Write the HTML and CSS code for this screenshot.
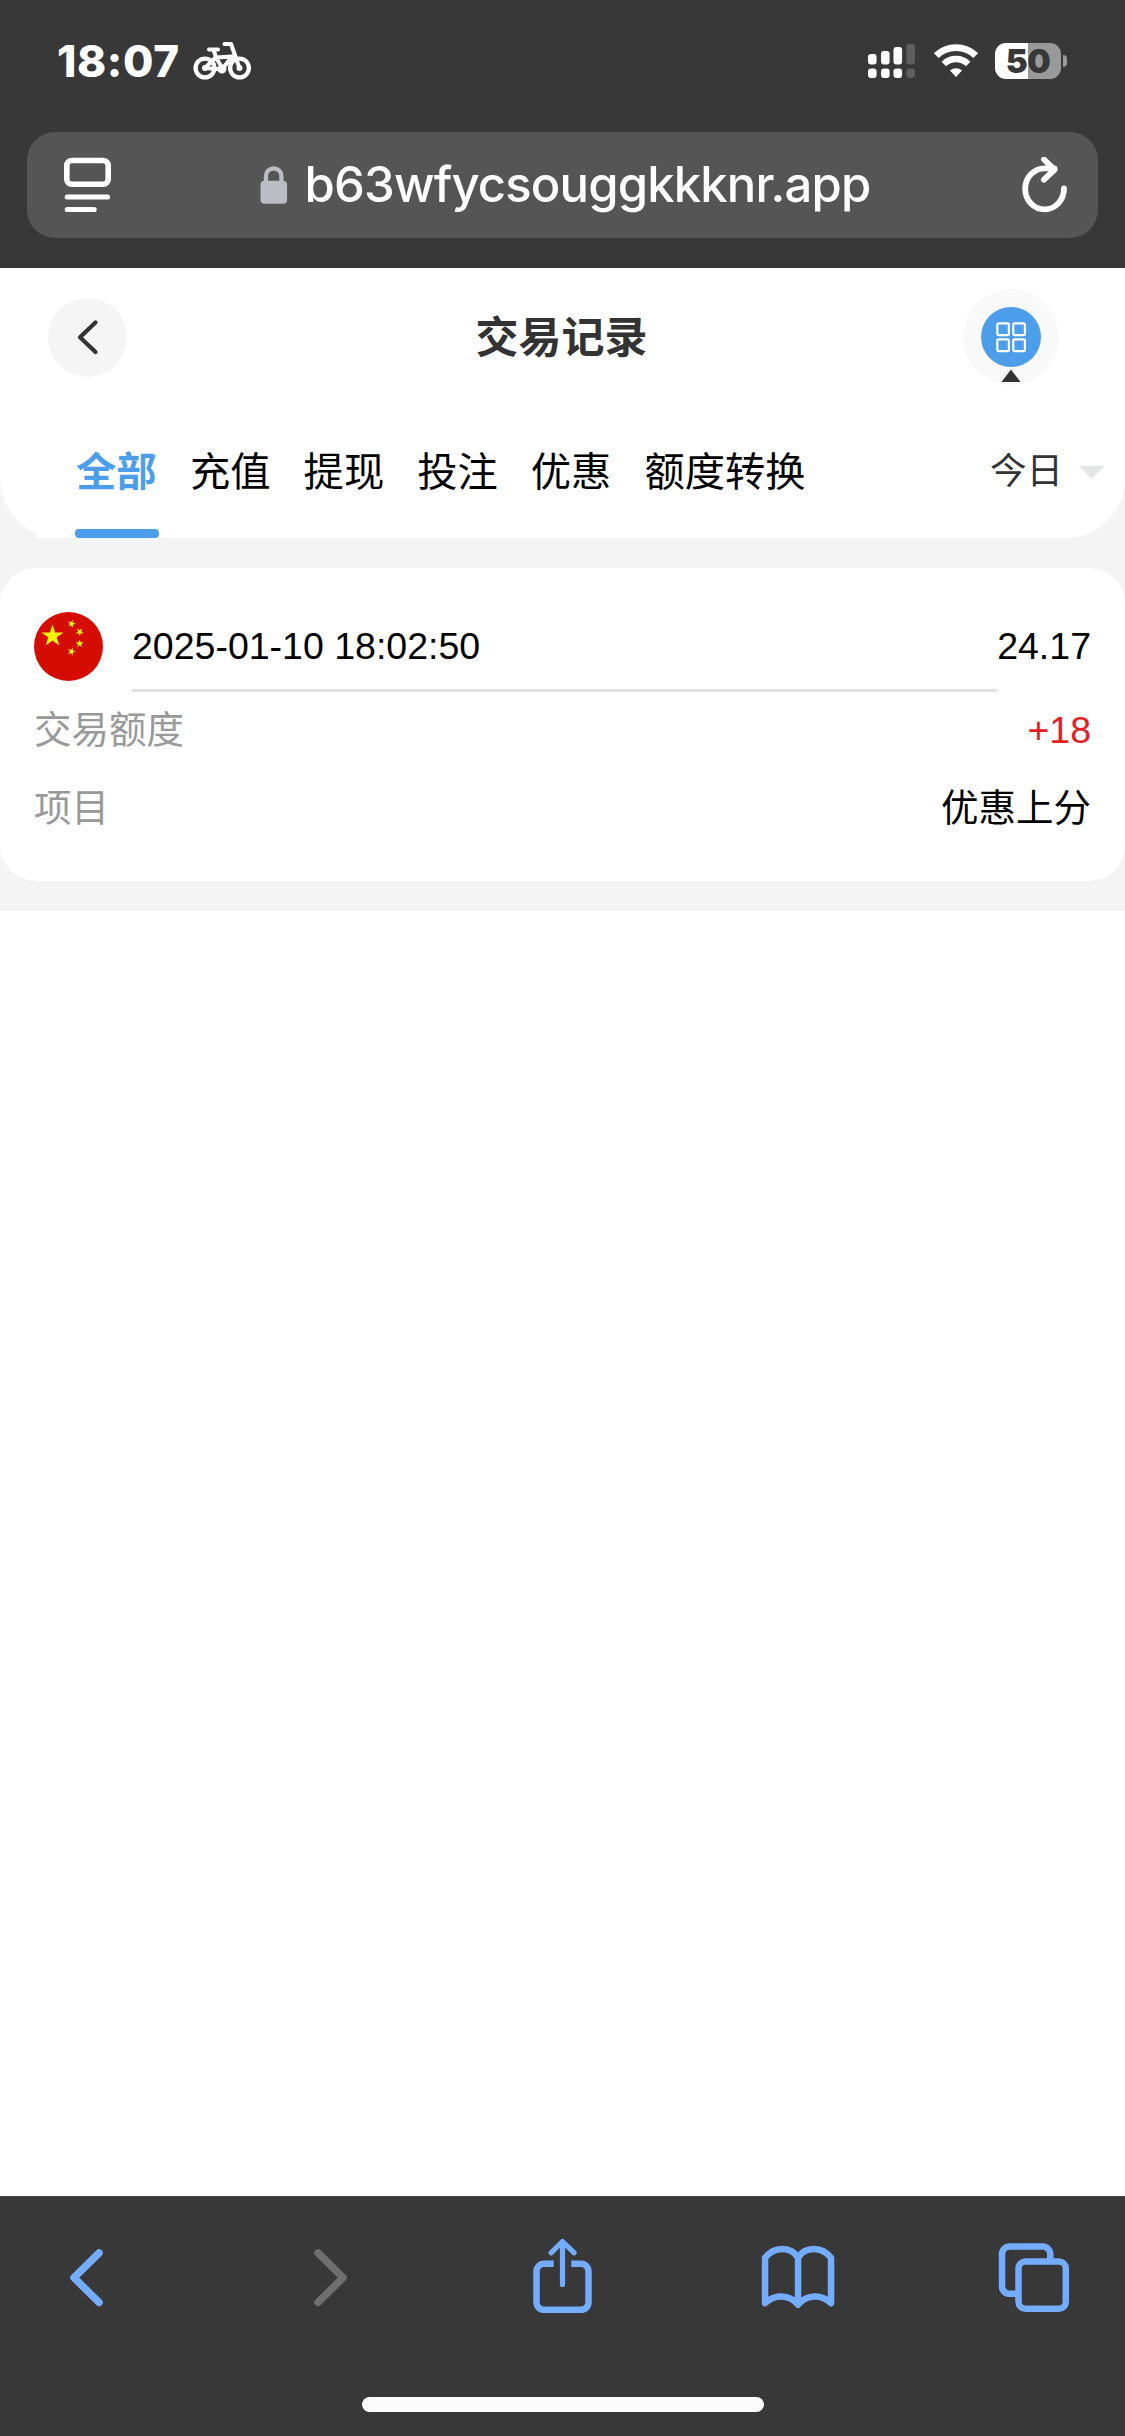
FILE: index.html
```html
<!DOCTYPE html>
<html lang="zh-CN">
<head>
<meta charset="utf-8">
<title>交易记录</title>
<link rel="stylesheet" href="styles.css">
</head>
<body>
<header class="browser-top">
  <div class="status">
    <span class="time">18:07</span>
    <svg class="bike" width="58" height="40" viewBox="193 42 58 40" fill="none" stroke="#fff" stroke-linecap="round" stroke-linejoin="round">
      <circle cx="205" cy="69" r="9.400" stroke-width="4.300"/>
      <circle cx="239.500" cy="69" r="9.400" stroke-width="4.300"/>
      <path d="M209 50.500h9M213.500 51l2.500 7L205 69l17 1.500L232 57.500l-16 1 6.500 11M224.500 45h6.500l8.500 24" stroke-width="4"/>
      <circle cx="205" cy="69" r="3" fill="#fff" stroke="none"/>
      <circle cx="222" cy="70" r="3" stroke-width="3"/>
      <circle cx="239.500" cy="69" r="3" fill="#fff" stroke="none"/>
    </svg>
    <svg class="signal" width="48" height="36" viewBox="868 43 48 36" fill="#fff">
      <rect x="868" y="54" width="8.600" height="10.500" rx="3"/>
      <rect x="881" y="51" width="8.600" height="13.500" rx="3"/>
      <rect x="893.500" y="47" width="8.600" height="17.500" rx="3"/>
      <rect x="906.300" y="44" width="8.600" height="20.500" rx="3" fill="#5f5f5f"/>
      <rect x="868" y="68.500" width="8.600" height="9.500" rx="3"/>
      <rect x="881" y="68.500" width="8.600" height="9.500" rx="3"/>
      <rect x="893.500" y="68.500" width="8.600" height="9.500" rx="3"/>
      <rect x="906.300" y="68.500" width="8.600" height="9.500" rx="3" fill="#5f5f5f"/>
    </svg>
    <svg class="wifi" width="44" height="34" viewBox="934 44 44 34" fill="none" stroke="#fff">
      <path d="M936.300 55.600a28.500 28.500 0 0 1 39.400 0" stroke-width="6.800"/>
      <path d="M943.800 64a17.600 17.600 0 0 1 24.400 0" stroke-width="6.500"/>
      <path d="M950 70.500a9 9 0 0 1 12 0l-6 6.500z" fill="#fff" stroke="none"/>
    </svg>
    <span class="battery">50</span>
    <span class="nub"></span>
  </div>
  <div class="address">
    <svg class="reader" width="48" height="56" viewBox="64 158 48 56" fill="none" stroke="#fff" stroke-width="5.600" stroke-linecap="round">
      <rect x="66.800" y="161.500" width="41.400" height="23.700" rx="5"/>
      <path d="M67.300 198h40.200M67.300 210.500h26.800" stroke-width="5.200"/>
    </svg>
    <div class="site">
      <svg width="28" height="38" viewBox="259.500 165.500 28 38">
        <path d="M265.500 182v-6.500a7.700 7.700 0 0 1 15.400 0v6.500" fill="none" stroke="#bbbcc4" stroke-width="4.300"/>
        <rect x="260" y="180.300" width="26.600" height="22.900" rx="4" fill="#bbbcc4"/>
      </svg>
      <span class="url">b63wfycsouggkkknr.app</span>
    </div>
    <svg class="reload" width="46" height="56" viewBox="1022 156 46 56" fill="none" stroke="#fff" stroke-width="5.800" stroke-linecap="round" stroke-linejoin="round">
      <path d="M1064 187.500a19.400 20.500 0 1 1-19.400-20.200h10M1044 158.500l10.600 10.200-10.600 10"/>
    </svg>
  </div>
</header>

<main class="page">
  <section class="panel">
    <div class="titlebar">
      <div class="back">
        <svg width="24" height="38" viewBox="75.500 318 24 38" fill="none" stroke="#333" stroke-width="4.200" stroke-linecap="round" stroke-linejoin="round"><path d="M95 322.500l-15.500 14.800L95 352"/></svg>
      </div>
      <h1>交易记录</h1>
      <div class="menu">
        <svg width="96" height="96" viewBox="963 289 96 96">
          <circle cx="1011" cy="337" r="30" fill="#4c9eea"/>
          <g fill="none" stroke="#fff" stroke-width="2.200">
            <rect x="997.300" y="323.300" width="11.600" height="11.800" rx="1.500"/>
            <rect x="1013.300" y="323.300" width="11.600" height="11.800" rx="1.500"/>
            <rect x="997.300" y="339.300" width="11.600" height="11.800" rx="1.500"/>
            <rect x="1013.300" y="339.300" width="11.600" height="11.800" rx="1.500"/>
          </g>
          <path d="M1011 369.500l9.500 12.500h-19z" fill="#333"/>
        </svg>
      </div>
    </div>
    <nav class="tabs">
      <span class="tab active">全部</span>
      <span class="tab">充值</span>
      <span class="tab">提现</span>
      <span class="tab">投注</span>
      <span class="tab">优惠</span>
      <span class="tab">额度转换</span>
      <span class="range">今日<svg width="25" height="13" viewBox="0 0 25 13"><path d="M0 0h25L12.500 13z" fill="#e3e5e8"/></svg></span>
    </nav>
  </section>

  <article class="card">
    <div class="head">
      <svg class="flag" width="69" height="69" viewBox="0 0 69 69">
        <defs><path id="star" d="M0-10L2.245-3.090H9.511L3.633 1.180 5.878 8.090 0 3.820-5.878 8.090-3.633 1.180-9.511-3.090H-2.245z"/></defs>
        <circle cx="34.500" cy="34.500" r="34.500" fill="#d40d00"/>
        <g fill="#fff400">
          <use href="#star" transform="translate(18.500 24) scale(1.160)"/>
          <use href="#star" transform="translate(37.500 11.800) rotate(15) scale(.430)"/>
          <use href="#star" transform="translate(45.700 20) rotate(35) scale(.430)"/>
          <use href="#star" transform="translate(45.600 31.700) scale(.430)"/>
          <use href="#star" transform="translate(37.500 39.500) rotate(20) scale(.430)"/>
        </g>
      </svg>
      <span class="date">2025-01-10 18:02:50</span>
      <span class="balance">24.17</span>
    </div>
    <div class="row"><span class="label">交易额度</span><span class="gain">+18</span></div>
    <div class="row"><span class="label">项目</span><span>优惠上分</span></div>
  </article>
</main>

<footer class="browser-bottom">
  <div class="tools">
    <svg width="90" height="90" viewBox="46 2232 90 90"><path d="M99 2253l-25 24.700 25 24.700" stroke-width="7.500"/></svg>
    <svg class="off" width="90" height="90" viewBox="281.750 2232 90 90"><path d="M317.800 2253l25 24.700-25 24.700" stroke-width="7.500"/></svg>
    <svg width="90" height="90" viewBox="517.500 2232 90 90">
      <path d="M553.200 2263.800h-9.700a7.500 7.500 0 0 0-7.500 7.500v31a7.500 7.500 0 0 0 7.500 7.500h37a7.500 7.500 0 0 0 7.500-7.500v-31a7.500 7.500 0 0 0-7.500-7.500h-9.700" stroke-linecap="butt"/>
      <path d="M562 2284.500v-42M550.500 2252.800l11.500-11.300 11.700 11.300" stroke-width="5.200"/>
    </svg>
    <svg width="90" height="90" viewBox="753.250 2232 90 90">
      <path d="M798.300 2257.500c-7-11.300-24-11.800-33 .5v45.300c9-9 24-9.500 33 1.500c9-11 24-10.500 33-1.500V2258c-9-12.300-26-11.800-33-.5zM798.300 2257.500v46"/>
    </svg>
    <svg width="90" height="90" viewBox="989 2232 90 90">
      <path d="M1016 2293.800h-6.500a7.500 7.500 0 0 1-7.500-7.500v-32.300a7.500 7.500 0 0 1 7.500-7.500h33.300a7.500 7.500 0 0 1 7.500 7.500v5" stroke-linecap="butt"/>
      <rect x="1018.500" y="2261.500" width="47.300" height="47.300" rx="7"/>
    </svg>
  </div>
  <div class="home"></div>
</footer>
</body>
</html>
```
FILE: styles.css
```css
* { box-sizing: border-box; }
body {
  margin: 0;
  width: 1125px;
  height: 2436px;
  display: flex;
  flex-direction: column;
  background: #fff;
  font-family: "Liberation Sans", "Noto Sans CJK SC", sans-serif;
  color: #000;
  overflow: hidden;
}
svg { display: block; flex: none; }

.browser-top {
  height: 268px;
  flex: none;
  background: #383838;
  padding: 0 27px;
  font-family: Inter, sans-serif;
  color: #fff;
}
.status {
  height: 132px;
  padding: 0 31px 10px 30px;
  display: flex;
  align-items: center;
}
.time {
  width: 136px;
  font-size: 44px;
  font-weight: 800;
  letter-spacing: 0.6px;
  line-height: 50px;
  white-space: nowrap;
}
.signal { margin-left: auto; }
.wifi { margin-left: 18px; }
.battery {
  margin-left: 17px;
  width: 66px;
  height: 36px;
  border-radius: 11px;
  background: linear-gradient(90deg, #fff 50%, #999 50%);
  color: #383838;
  font-size: 33px;
  font-weight: 900;
  letter-spacing: -0.5px;
  line-height: 37px;
  text-align: center;
}
.nub {
  margin-left: 2px;
  width: 4px;
  height: 12px;
  border-radius: 0 4px 4px 0;
  background: #999;
}
.address {
  height: 106px;
  border-radius: 28px;
  background: #555;
  padding: 0 30px 0 37px;
  display: flex;
  align-items: center;
  justify-content: space-between;
}
.site { display: flex; align-items: center; gap: 17px; margin-right: 4px; }
.url {
  font-size: 49px;
  font-weight: 500;
  letter-spacing: -0.85px;
  line-height: 60px;
  white-space: nowrap;
}

.page { background: #f4f4f4; height: 643px; flex: none; }
.panel {
  height: 270px;
  background: #fff;
  border-radius: 0 0 60px 60px;
}
.titlebar {
  height: 138px;
  padding: 0 66px 0 48px;
  display: grid;
  grid-template-columns: 96px 1fr 96px;
  align-items: center;
}
.back {
  width: 79px;
  height: 79px;
  border-radius: 50%;
  background: #f5f5f5;
  display: flex;
  align-items: center;
  justify-content: center;
}
.menu { border-radius: 50%; background: #f9f9f9; }
h1 {
  margin: 2px 0 0 16px;
  font-size: 43px;
  font-weight: 700;
  line-height: 60px;
  text-align: center;
  color: #333;
}
.tabs {
  height: 132px;
  margin-left: 36px;
  padding: 0 21px 0 39px;
  display: flex;
  gap: 33px;
  font-size: 40.300px;
  line-height: 134px;
  background: #fff;
  border-bottom-right-radius: 60px;
  white-space: nowrap;
}
.active {
  width: 84px;
  margin-right: -2px;
  text-indent: 1px;
  color: #4c9eea;
  font-weight: 700;
  display: flex;
  flex-direction: column;
}
.active::after {
  content: "";
  height: 9px;
  margin-top: -11px;
  border-radius: 4px;
  background: #4c9eea;
}
.range {
  margin-left: auto;
  display: flex;
  align-items: center;
  gap: 16px;
  font-size: 36.500px;
  color: #333;
}

.card {
  height: 313px;
  margin-top: 30px;
  border-radius: 36px;
  background: #fff;
  padding: 31px 34px 0;
  font-size: 37.500px;
}
.head {
  height: 93px;
  display: flex;
  align-items: stretch;
  line-height: 94px;
}
.flag { margin: 13px 29px 0 0; }
.date { flex: 1; border-bottom: 3px solid #e1e1e1; }
.row {
  display: flex;
  justify-content: space-between;
  height: 78px;
  line-height: 77px;
}
.label { color: #999; }
.gain { color: #e5201f; }

.browser-bottom {
  margin-top: auto;
  height: 240px;
  background: #383838;
  border-top: 1px solid #4a4a4a;
  padding: 35px 46px 0;
}
.tools {
  display: flex;
  justify-content: space-between;
  fill: none;
  stroke: #74acff;
  stroke-width: 6.500px;
  stroke-linecap: round;
  stroke-linejoin: round;
}
.off { stroke: #6f6f6f; }
.home {
  width: 402px;
  height: 15px;
  margin: 75px auto 0;
  border-radius: 8px;
  background: #fcfcfc;
}
```
